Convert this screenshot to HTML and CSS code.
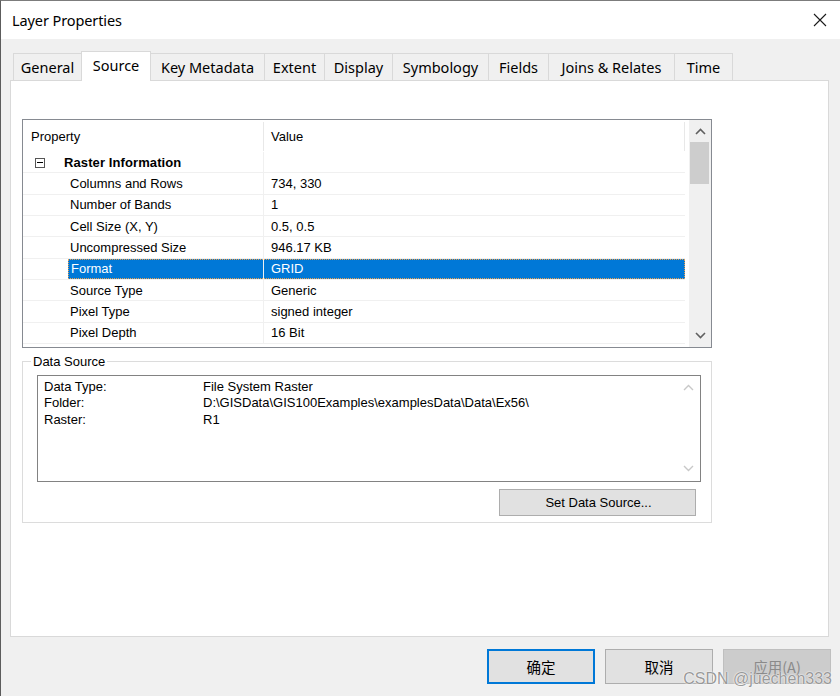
FILE: index.html
```
<!DOCTYPE html>
<html>
<head>
<meta charset="utf-8">
<link rel="stylesheet" href="styles.css">
</head>
<body>
<div class="window">
  <div class="titlebar">
    <span class="title">Layer Properties</span>
    <svg class="close" width="14" height="14" viewBox="0 0 14 14"><path d="M1 1 L13 13 M13 1 L1 13" stroke="#1a1a1a" stroke-width="1.1" fill="none"/></svg>
  </div>
  <div class="client">
    <div class="tabs">
      <div class="tab t-general">General</div>
      <div class="tab active t-source">Source</div>
      <div class="tab t-key">Key Metadata</div>
      <div class="tab t-extent">Extent</div>
      <div class="tab t-display">Display</div>
      <div class="tab t-symbology">Symbology</div>
      <div class="tab t-fields">Fields</div>
      <div class="tab t-joins">Joins &amp; Relates</div>
      <div class="tab t-time">Time</div>
    </div>
    <div class="panel">
      <div class="grid">
        <div class="grid-list">
          <div class="grid-head">
            <div class="hc1">Property</div>
            <div class="hc2">Value</div>
          </div>
          <div class="row cat">
            <div class="c1"><span class="expander"><span class="minus"></span></span><b>Raster Information</b></div>
            <div class="c2"></div>
          </div>
          <div class="row"><div class="c1">Columns and Rows</div><div class="c2">734, 330</div></div>
          <div class="row"><div class="c1">Number of Bands</div><div class="c2">1</div></div>
          <div class="row"><div class="c1">Cell Size (X, Y)</div><div class="c2">0.5, 0.5</div></div>
          <div class="row"><div class="c1">Uncompressed Size</div><div class="c2">946.17 KB</div></div>
          <div class="row selected"><div class="c1"><span class="sel1">Format</span></div><div class="c2"><span class="sel2">GRID</span></div></div>
          <div class="row"><div class="c1">Source Type</div><div class="c2">Generic</div></div>
          <div class="row"><div class="c1">Pixel Type</div><div class="c2">signed integer</div></div>
          <div class="row"><div class="c1">Pixel Depth</div><div class="c2">16 Bit</div></div>
        </div>
        <div class="vscroll">
          <svg class="arrow" width="11" height="7" viewBox="0 0 11 7"><path d="M1 6 L5.5 1.5 L10 6" stroke="#606060" stroke-width="1.6" fill="none"/></svg>
          <div class="track"><div class="thumb"></div></div>
          <svg class="arrow" width="11" height="7" viewBox="0 0 11 7"><path d="M1 1 L5.5 5.5 L10 1" stroke="#606060" stroke-width="1.6" fill="none"/></svg>
        </div>
      </div>

      <fieldset class="ds">
        <legend>Data Source</legend>
        <div class="textbox">
          <div class="tb-text">
            <div class="tb-line"><span class="tb-k">Data Type:</span><span>File System Raster</span></div>
            <div class="tb-line"><span class="tb-k">Folder:</span><span>D:\GISData\GIS100Examples\examplesData\Data\Ex56\</span></div>
            <div class="tb-line"><span class="tb-k">Raster:</span><span>R1</span></div>
          </div>
          <div class="tb-scroll">
            <svg width="11" height="7" viewBox="0 0 11 7"><path d="M1 6 L5.5 1.5 L10 6" stroke="#c8c8c8" stroke-width="1.4" fill="none"/></svg>
            <svg width="11" height="7" viewBox="0 0 11 7"><path d="M1 1 L5.5 5.5 L10 1" stroke="#c8c8c8" stroke-width="1.4" fill="none"/></svg>
          </div>
        </div>
        <div class="ds-actions">
          <div class="btn-set">Set Data Source...</div>
        </div>
      </fieldset>
    </div>
    <div class="buttons">
      <div class="btn default">确定</div>
      <div class="btn">取消</div>
      <div class="btn disabled">应用(A)</div>
    </div>
    <div class="watermark">CSDN @juechen333</div>
  </div>
</div>
</body>
</html>
```
FILE: styles.css
```
* { box-sizing: border-box; }
html, body { margin: 0; padding: 0; }
body {
  width: 840px;
  height: 696px;
  overflow: hidden;
  background: #f0f0f0;
  font-family: "Noto Sans", "Noto Sans CJK SC", sans-serif;
}
.window {
  width: 840px;
  height: 696px;
  border-top: 1px solid #7c7c7c;
  border-left: 1px solid #5c5c5c;
  display: flex;
  flex-direction: column;
  background: #f0f0f0;
}
.titlebar {
  height: 38px;
  background: #ffffff;
  display: flex;
  align-items: center;
  justify-content: space-between;
  padding: 0 13px 0 11px;
  flex: none;
}
.title {
  font-size: 14.5px;
  color: #000;
  letter-spacing: -0.1px;
}

.client {
  position: relative;
  flex: 1;
  padding: 12px 0 0 9px;
  display: flex;
  flex-direction: column;
}
.tabs {
  display: flex;
  height: 29px;
  margin-left: 3px;
  align-items: flex-end;
  font-size: 14.5px;
  color: #000;
}
.tab {
  height: 27px;
  border: 1px solid #d9d9d9;
  border-bottom: none;
  background: #f0f0f0;
  margin-right: -1px;
  display: flex;
  align-items: center;
  justify-content: center;
  padding-bottom: 1px;
  white-space: nowrap;
}
.tab.active {
  height: 30px;
  background: #ffffff;
  margin-bottom: -1px;
  position: relative;
  z-index: 2;
  padding-bottom: 4px;
}
.t-general { width: 69px; }
.t-source { width: 70px; }
.t-key { width: 115px; }
.t-extent { width: 61px; }
.t-display { width: 69px; }
.t-symbology { width: 97px; }
.t-fields { width: 61px; }
.t-joins { width: 127px; }
.t-time { width: 59px; }

.panel {
  width: 819px;
  height: 557px;
  background: #ffffff;
  border: 1px solid #d9d9d9;
  padding: 38px 0 0 11px;
  position: relative;
  z-index: 1;
}

/* property grid */
.grid {
  width: 690px;
  height: 229px;
  border: 1px solid #868a91;
  display: flex;
  font-family: "Liberation Sans", Arial, sans-serif;
  font-size: 13px;
  color: #000;
  overflow: hidden;
}
.grid-list {
  width: 665px;
  flex: none;
  background: #fff;
}
.grid-head {
  height: 32px;
  display: flex;
  align-items: center;
}
.hc1 {
  width: 241px;
  height: 29px;
  padding-left: 8px;
  display: flex;
  align-items: center;
  border-right: 1px solid #e8e8e8;
}
.hc2 {
  width: 421px;
  height: 29px;
  padding-left: 7px;
  display: flex;
  align-items: center;
  border-right: 1px solid #e8e8e8;
}
.row {
  height: 21.33px;
  display: flex;
  width: 662px;
}
.c1 {
  width: 241px;
  padding-left: 47px;
  border-right: 1px solid #f0f0f0;
  border-bottom: 1px solid #f0f0f0;
  display: flex;
  align-items: center;
  white-space: nowrap;
}
.c2 {
  flex: 1;
  padding-left: 7px;
  border-bottom: 1px solid #f0f0f0;
  display: flex;
  align-items: center;
  white-space: nowrap;
}
.row.cat .c1 {
  padding-left: 12px;
}
.expander {
  width: 10px;
  height: 10px;
  border: 1px solid #555;
  display: flex;
  align-items: center;
  justify-content: center;
  margin-right: 19px;
  margin-top: 1px;
}
.minus {
  width: 6px;
  height: 1px;
  background: #000;
}
.row.cat b { font-weight: bold; letter-spacing: 0.1px; }

.row.selected .c1 {
  padding-left: 45px;
  align-items: stretch;
}
.sel1 {
  flex: 1;
  background: #0078d7;
  color: #fff;
  padding-left: 2px;
  display: flex;
  align-items: center;
  border-top: 1px dotted #e8a050;
  border-left: 1px dotted #e8a050;
  border-bottom: 1px dotted #e8a050;
}
.row.selected .c2 {
  padding-left: 0;
  align-items: stretch;
}
.sel2 {
  flex: 1;
  background: #0078d7;
  color: #fff;
  padding-left: 7px;
  display: flex;
  align-items: center;
  border-top: 1px dotted #e8a050;
  border-right: 1px dotted #e8a050;
  border-bottom: 1px dotted #e8a050;
}

.vscroll {
  width: 22px;
  flex: none;
  margin-left: 1px;
  background: #f0f0f0;
  display: flex;
  flex-direction: column;
  align-items: center;
}
.vscroll .arrow {
  flex: none;
  margin: 8px 0 7px;
}
.vscroll .arrow:last-child { margin: 7px 0 8px; }
.track {
  flex: 1;
  width: 100%;
  padding: 0 2px 0 1px;
}
.thumb {
  width: 100%;
  height: 42px;
  background: #cdcdcd;
}

/* data source group */
.ds {
  width: 690px;
  height: 169px;
  margin: 6px 0 0 0;
  padding: 0 10px 0 14px;
  border: 1px solid #dcdcdc;
  font-family: "Liberation Sans", Arial, sans-serif;
  font-size: 13px;
  color: #000;
  display: flex;
  flex-direction: column;
}
.ds legend {
  padding: 0 2px;
  margin-left: -6px;
  line-height: 15px;
}
.textbox {
  margin-top: 6px;
  height: 107px;
  border: 1px solid #828282;
  display: flex;
  background: #fff;
}
.tb-text {
  flex: 1;
  padding: 2px 0 0 6px;
}
.tb-line {
  height: 16.5px;
  display: flex;
  align-items: center;
  white-space: nowrap;
}
.tb-k { width: 159px; }
.tb-scroll {
  width: 20px;
  display: flex;
  flex-direction: column;
  justify-content: space-between;
  align-items: center;
  padding: 8px 3px 9px 0;
}
.ds-actions {
  display: flex;
  justify-content: flex-end;
  padding: 7px 5px 0 0;
}
.btn-set {
  width: 197px;
  height: 27px;
  background: #e1e1e1;
  border: 1px solid #adadad;
  display: flex;
  align-items: center;
  justify-content: center;
  padding-left: 2px;
}

/* bottom buttons */
.buttons {
  display: flex;
  justify-content: flex-end;
  gap: 10px;
  padding: 12px 9px 0 0;
  font-family: "Noto Sans CJK SC", "Noto Sans", sans-serif;
  font-size: 14.5px;
}
.btn {
  width: 108px;
  height: 35px;
  background: #e1e1e1;
  border: 1px solid #adadad;
  display: flex;
  align-items: center;
  justify-content: center;
  color: #000;
}
.btn.default {
  border: 2px solid #0078d7;
}
.btn.disabled {
  background: #cccccc;
  border-color: #bfbfbf;
  color: #8a8a8a;
}
.watermark {
  position: absolute;
  right: 8px;
  bottom: 8px;
  font-family: "Liberation Sans", Arial, sans-serif;
  font-size: 16px;
  color: rgba(120, 120, 120, 0.75);
  text-shadow: 0 0 2px #fff, 0 0 1px #fff;
}
```
